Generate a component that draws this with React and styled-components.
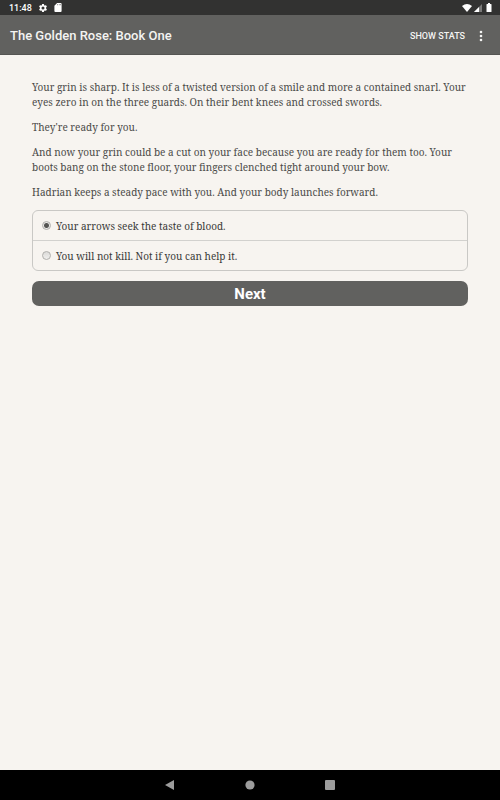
import React from "react";
import styled, { createGlobalStyle } from "styled-components";

const GlobalStyle = createGlobalStyle`
  *, *::before, *::after { box-sizing: border-box; }
  body { margin: 0; background: #f7f4f0; }
`;

const Screen = styled.div`
  display: flex;
  flex-direction: column;
  min-height: 100vh;
  background: #f7f4f0;
  font-family: Roboto, sans-serif;
`;

const StatusBar = styled.div`
  display: flex;
  align-items: center;
  justify-content: space-between;
  height: 15px;
  padding: 0 7px 0 9px;
  background: #323231;
  color: #fff;
`;

const StatusGroup = styled.div`
  display: flex;
  align-items: center;
  gap: ${(p) => p.$gap}px;
`;

const Clock = styled.time`
  padding-top: 1px;
  font-size: 9px;
  font-weight: 500;
  line-height: 15px;
`;

const AppBar = styled.header`
  display: flex;
  align-items: center;
  height: 40px;
  padding: 2px 10px 0;
  background: #61615f;
  box-shadow: inset 0 -1px #555553;
  color: #f4f4f2;
`;

const Title = styled.h1`
  flex: 1;
  margin: 0;
  font-size: 13px;
  font-weight: 500;
  line-height: 20px;
`;

const BarButton = styled.button`
  display: flex;
  align-items: center;
  padding: 0;
  border: 0;
  background: none;
  color: inherit;
  font: 500 9px/16px Roboto, sans-serif;
  cursor: pointer;
`;

const MenuButton = styled(BarButton)`
  justify-content: center;
  width: 20px;
  height: 20px;
  margin-left: 6px;
  margin-right: -1px;
`;

const Story = styled.main`
  flex: 1;
  padding: 25px 32px;
  color: #4a4a48;
  font-family: "Noto Serif", "DejaVu Serif Condensed", "DejaVu Serif", serif;
  font-size: 10px;
  line-height: 15px;
`;

const Paragraph = styled.p`
  margin: 0 0 10px;
`;

const Choices = styled.fieldset`
  margin: 0 0 10px;
  padding: 0;
  border: 1px solid #c9c8c5;
  border-radius: 6px;
`;

const Choice = styled.label`
  display: flex;
  align-items: center;
  gap: 5px;
  min-height: 29px;
  padding: 2px 9px 0;
  color: #3a3a38;
  cursor: pointer;

  & + & {
    min-height: 30px;
    border-top: 1px solid #d2d1ce;
  }
`;

const Radio = styled.input`
  appearance: none;
  flex: none;
  width: 9px;
  height: 9px;
  margin: 0 0 2px;
  border: 1px solid #b0afac;
  border-radius: 50%;
  background: linear-gradient(#dcdbd9, #efeeec);

  &:checked {
    background: radial-gradient(circle, #555553 0 2px, #e9e8e6 3px);
  }
`;

const NextButton = styled.button`
  display: block;
  width: 100%;
  height: 25px;
  padding: 1px 0 0;
  border: 0;
  border-radius: 7px;
  background: #61615f;
  color: #fff;
  font: 700 15px/20px Roboto, sans-serif;
  cursor: pointer;
`;

const NavBar = styled.nav`
  display: flex;
  align-items: center;
  justify-content: center;
  gap: 60px;
  height: 30px;
  background: #000;
`;

const NavButton = styled.button`
  display: flex;
  align-items: center;
  justify-content: center;
  width: 20px;
  height: 20px;
  padding: 0;
  border: 0;
  background: none;
  color: #9c9c9c;
`;

const Icon = styled.svg`
  display: block;
  fill: currentColor;
`;

const story = [
  "Your grin is sharp. It is less of a twisted version of a smile and more a contained snarl. Your eyes zero in on the three guards. On their bent knees and crossed swords.",
  "They're ready for you.",
  "And now your grin could be a cut on your face because you are ready for them too. Your boots bang on the stone floor, your fingers clenched tight around your bow.",
  "Hadrian keeps a steady pace with you. And your body launches forward.",
];

const choices = [
  "Your arrows seek the taste of blood.",
  "You will not kill. Not if you can help it.",
];

export default function App() {
  return (
    <Screen>
      <GlobalStyle />
      <StatusBar>
        <StatusGroup $gap={6}>
          <Clock>11:48</Clock>
          <Icon width="10" height="10" viewBox="0 0 24 24">
            <path d="M19.14 12.94c.04-.3.06-.61.06-.94s-.02-.64-.07-.94l2.03-1.58a.49.49 0 0 0 .12-.61l-1.92-3.32a.49.49 0 0 0-.59-.22l-2.39.96a7 7 0 0 0-1.62-.94l-.36-2.54a.48.48 0 0 0-.48-.41h-3.84a.48.48 0 0 0-.47.41l-.36 2.54a7 7 0 0 0-1.62.94l-2.39-.96a.48.48 0 0 0-.59.22L2.74 8.87a.48.48 0 0 0 .12.61l2.03 1.58a7.5 7.5 0 0 0 0 1.88l-2.03 1.58a.49.49 0 0 0-.12.61l1.92 3.32c.12.22.37.29.59.22l2.39-.96a7 7 0 0 0 1.62.94l.36 2.54c.05.24.24.41.48.41h3.84c.24 0 .44-.17.47-.41l.36-2.54a7 7 0 0 0 1.62-.94l2.39.96c.22.08.47 0 .59-.22l1.92-3.32a.48.48 0 0 0-.12-.61zM12 15.6a3.6 3.6 0 1 1 0-7.2 3.6 3.6 0 0 1 0 7.2z" />
          </Icon>
          <Icon width="8" height="9" viewBox="0 0 16 20">
            <path d="M14 0H6L0 6v12a2 2 0 0 0 2 2h12a2 2 0 0 0 2-2V2a2 2 0 0 0-2-2zM8 5H7V2h1zm3 0h-1V2h1zm3 0h-1V2h1z" />
          </Icon>
        </StatusGroup>
        <StatusGroup $gap={2}>
          <Icon width="10" height="8" viewBox="0 0 10 8">
            <path d="M0 2Q5-2 10 2L5 8z" />
          </Icon>
          <Icon width="8" height="8" viewBox="0 0 8 8">
            <path d="M8 0v8H0z" opacity=".35" />
            <path d="M5 3v5H0z" />
          </Icon>
          <Icon width="9" height="9" viewBox="0 0 9 9">
            <path d="M3 1h1V0h2v1h1q.5 0 .5.5v7q0 .5-.5.5H3q-.5 0-.5-.5v-7Q2.5 1 3 1z" />
          </Icon>
        </StatusGroup>
      </StatusBar>
      <AppBar>
        <Title>The Golden Rose: Book One</Title>
        <BarButton type="button">SHOW STATS</BarButton>
        <MenuButton type="button" aria-label="More options">
          <Icon width="4" height="12" viewBox="0 0 4 12">
            <circle cx="2" cy="2" r="1.3" />
            <circle cx="2" cy="6" r="1.3" />
            <circle cx="2" cy="10" r="1.3" />
          </Icon>
        </MenuButton>
      </AppBar>
      <Story>
        {story.map((text) => (
          <Paragraph key={text}>{text}</Paragraph>
        ))}
        <Choices aria-label="Choices">
          {choices.map((text, index) => (
            <Choice key={text}>
              <Radio type="radio" name="choice" defaultChecked={index === 0} />
              <span>{text}</span>
            </Choice>
          ))}
        </Choices>
        <NextButton type="button">Next</NextButton>
      </Story>
      <NavBar aria-label="System navigation">
        <NavButton type="button" aria-label="Back">
          <Icon width="10" height="10" viewBox="0 0 10 10">
            <path d="M9 0v10L0 5z" />
          </Icon>
        </NavButton>
        <NavButton type="button" aria-label="Home">
          <Icon width="10" height="10" viewBox="0 0 10 10">
            <circle cx="5" cy="5" r="4.6" />
          </Icon>
        </NavButton>
        <NavButton type="button" aria-label="Recent apps">
          <Icon width="10" height="10" viewBox="0 0 10 10">
            <rect width="10" height="10" rx="1" />
          </Icon>
        </NavButton>
      </NavBar>
    </Screen>
  );
}
